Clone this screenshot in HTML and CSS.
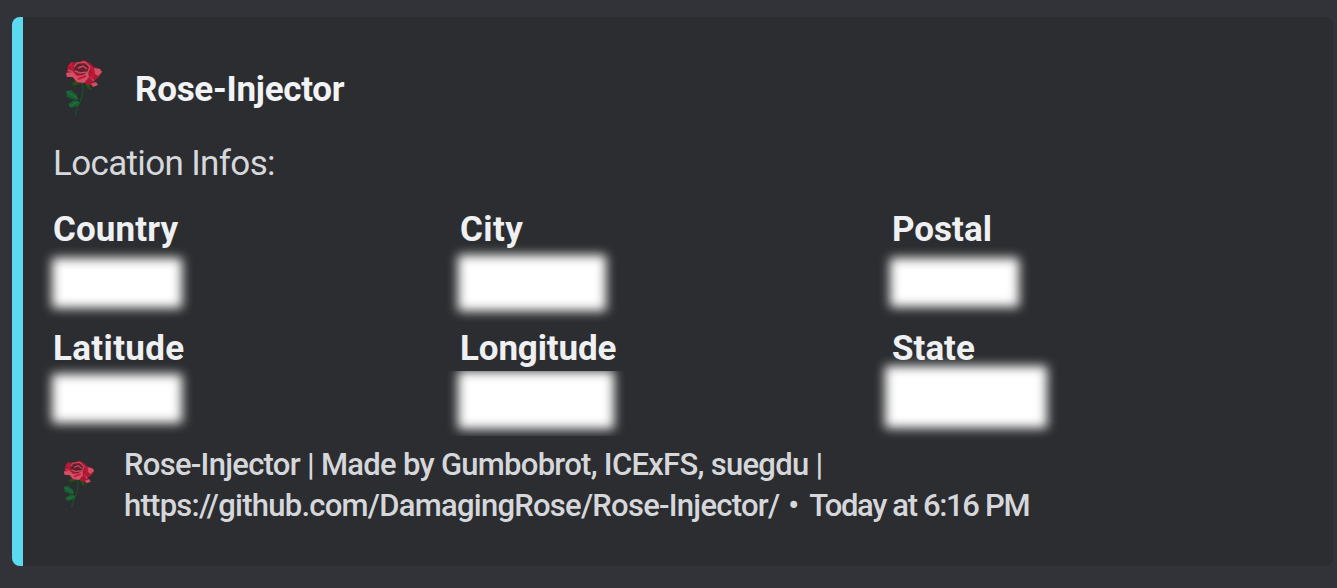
FILE: index.html
```html
<!DOCTYPE html>
<html lang="en">
<head>
<meta charset="utf-8">
<title>Rose-Injector</title>
<link rel="stylesheet" href="styles.css">
</head>
<body>
<svg class="defs" aria-hidden="true">
  <symbol id="rose" viewBox="0 0 38 58">
    <path d="M17 22 18 29Q17 40 13 46L10 56" fill="none" stroke="#19502c" stroke-width="1.3"/>
    <path d="M6 24 10 21 16 23 10 26ZM19 22 24 23 27 30 23 29Z" fill="#245012"/>
    <path d="M1 31 6 30 12 35 13 40 7 39 2 37ZM3 44 9 40 15 42 13 46 6 48Z" fill="#175f33"/>
    <path d="M2 32 12 38M4 46 13 42" stroke="#27754a" stroke-width="1" fill="none"/>
    <path d="M3 6 6 2 14 3 18 0 25 3 29 7 35 9 37 12 34 17 29 21 30 25 23 25 18 22 12 23 8 18 1 15 2 11Z" fill="#a91934"/>
    <path d="M8 6 14 3 23 5 24 12 16 15 10 12Z" fill="#66202d"/>
    <path d="M1 13 8 12 12 16 18 15 23 12 24 17 19 23 12 22 8 17 2 17ZM29 8 35 9 37 12 33 16 30 14ZM26 24 31 22 33 25 28 27Z" fill="#ce5165"/>
    <path d="M9 7 12 3 20 2 25 7 23 12 15 13 10 11M13 8 18 6 22 9M3 10 8 12M25 17 29 21" fill="none" stroke="#c64d61" stroke-width="1.4"/>
    <path d="M4 6 6 4 8 10M26 7 29 12 26 19M13 19 21 16" fill="none" stroke="#c81838" stroke-width="2"/>
  </symbol>
</svg>
<article class="embed">
  <header class="author">
    <svg class="author-icon"><use href="#rose"/></svg>
    <span class="author-name">Rose-Injector</span>
  </header>
  <p class="description">Location Infos:</p>
  <section class="fields">
    <div class="field"><div class="label country">Country</div><div class="mask mask-country"></div></div>
    <div class="field"><div class="label city">City</div><div class="mask mask-city"></div></div>
    <div class="field"><div class="label postal">Postal</div><div class="mask mask-postal"></div></div>
    <div class="field"><div class="label latitude">Latitude</div><div class="mask mask-latitude"></div></div>
    <div class="field"><div class="label longitude">Longitude</div><div class="clip"><div class="mask mask-longitude"></div></div></div>
    <div class="field"><div class="label state">State</div><div class="mask mask-state"></div></div>
  </section>
  <footer class="footer">
    <svg class="footer-icon"><use href="#rose"/></svg>
    <div class="footer-text"><div class="credits">Rose-Injector | Made by Gumbobrot, ICExFS, suegdu |</div><div class="link">https://github.com/DamagingRose/Rose-Injector/<span class="dot"> • </span><span class="time">Today at 6:16 PM</span></div></div>
  </footer>
</article>
</body>
</html>
```
FILE: styles.css
```css
* { box-sizing: border-box; }
body {
  margin: 0;
  height: 588px;
  padding: 17px 4px 22px 12px;
  overflow: hidden;
  background: #323338;
  font-family: Roboto, "Noto Sans", sans-serif;
  white-space: nowrap;
}
.defs { position: absolute; width: 0; height: 0; }
.embed {
  height: 549px;
  padding: 41px 0 0 30px;
  border-left: 11px solid #5cdbf0;
  border-radius: 8px;
  background: #2c2d30;
}
.author { display: flex; height: 64px; padding-left: 12px; }
.author-icon { width: 38px; height: 58px; margin-top: 2px; filter: blur(0.5px); }
.author-name {
  margin-left: 32px;
  line-height: 64px;
  font-size: 35px;
  font-weight: 700;
  letter-spacing: -0.27px;
  color: #f2f3f5;
}
.description {
  margin: 19px 0 0;
  line-height: 46px;
  font-size: 35px;
  letter-spacing: -0.65px;
  color: #d5d8dc;
}
.fields {
  display: grid;
  grid-template-columns: 407px 432px 300px;
  grid-template-rows: 119px 119px;
  margin-top: 21px;
}
.label {
  width: max-content;
  line-height: 44px;
  font-size: 35px;
  font-weight: 700;
  color: #eff0f2;
}
.country { letter-spacing: 0.1px; }
.city { letter-spacing: 0.4px; }
.latitude { letter-spacing: 0.35px; }
.longitude { letter-spacing: -0.15px; }
.mask { background: #fff; filter: blur(5.5px); }
.mask-country { width: 130px; height: 50px; margin: 6px 0 0 -1px; }
.mask-city { width: 148px; height: 56px; margin: 3px 0 0 -2px; }
.mask-postal { width: 129px; height: 49px; margin: 6px 0 0 -2px; }
.mask-latitude { width: 130px; height: 49px; margin: 3px 0 0 -1px; }
.clip { width: 184px; height: 65px; margin: 0 0 0 -14px; padding-left: 12px; overflow: hidden; }
.mask-longitude { width: 156px; height: 58px; }
.mask-state { width: 162px; height: 62px; margin: -5px 0 0 -7px; }
.footer { display: flex; margin-top: -2px; padding-left: 10px; }
.footer-icon { width: 32px; height: 50px; margin-top: 16px; filter: blur(0.5px); }
.footer-text {
  margin-left: 29px;
  line-height: 41px;
  font-size: 31px;
  font-weight: 500;
  color: #d5d7db;
}
.credits, .link { width: max-content; }
.credits { letter-spacing: -0.72px; }
.link { letter-spacing: -0.74px; }
.dot { letter-spacing: 1.2px; }
.time { letter-spacing: -1.35px; }
```
